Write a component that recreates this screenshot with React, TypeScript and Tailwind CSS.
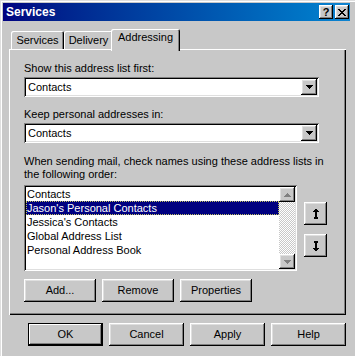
import React from "react";

const raised =
  "shadow-[inset_-1px_-1px_#000,inset_1px_1px_#fff,inset_-2px_-2px_#808080,inset_2px_2px_#dfdfdf]";
const sunken =
  "shadow-[inset_1px_1px_#808080,inset_-1px_-1px_#fff,inset_2px_2px_#000,inset_-2px_-2px_#dfdfdf]";

function Button({
  label,
  width,
  isDefault,
}: {
  label: string;
  width: string;
  isDefault?: boolean;
}): React.ReactElement {
  if (isDefault) {
    return (
      <div className={`${width} h-[23px] border border-black`}>
        <div
          className={`flex h-full w-full items-center justify-center shadow-[inset_-1px_-1px_#000,inset_1px_1px_#fff,inset_-2px_-2px_#808080] leading-[13px]`}
        >
          {label}
        </div>
      </div>
    );
  }
  return (
    <div className={`${width} flex h-[23px] items-center justify-center ${raised} leading-[13px]`}>
      {label}
    </div>
  );
}

function DropArrow(): React.ReactElement {
  return (
    <svg width="7" height="4" viewBox="0 0 7 4" shapeRendering="crispEdges">
      <path d="M0 0h7v1H0zM1 1h5v1H1zM2 2h3v1H2zM3 3h1v1H3z" fill="#000" />
    </svg>
  );
}

function Combo({ value }: { value: string }): React.ReactElement {
  return (
    <div className={`mt-[2px] flex h-[20px] w-[295px] items-center bg-white p-[2px] ${sunken}`}>
      <span className="flex-1 pl-[2px] leading-[13px]">{value}</span>
      <div className={`flex h-[16px] w-[16px] items-center justify-center bg-[#c8c8c8] ${raised}`}>
        <DropArrow />
      </div>
    </div>
  );
}

function ScrollArrow({ up }: { up?: boolean }): React.ReactElement {
  return (
    <div className={`flex h-[15px] w-[16px] items-center justify-center bg-[#c8c8c8] ${raised}`}>
      <svg width="7" height="4" viewBox="0 0 7 4" shapeRendering="crispEdges">
        <path
          d={up ? "M3 0h1v1H3zM2 1h3v1H2zM1 2h5v1H1zM0 3h7v1H0z" : "M0 0h7v1H0zM1 1h5v1H1zM2 2h3v1H2zM3 3h1v1H3z"}
          fill="#808080"
        />
      </svg>
    </div>
  );
}

function MoveIcon({ up }: { up?: boolean }): React.ReactElement {
  return (
    <svg width="6" height="10" viewBox="0 0 6 10" shapeRendering="crispEdges">
      <path
        d={
          up
            ? "M2 0h2v1h1v1h1v1H0V2h1V1h1zM2 3h2v5H2zM1 8h4v2H1z"
            : "M1 0h4v2H1zM2 2h2v5H2zM0 7h6v1H5v1H4v1H2V9H1V8H0z"
        }
        fill="#000"
      />
    </svg>
  );
}

const ITEMS = [
  "Contacts",
  "Jason's Personal Contacts",
  "Jessica's Contacts",
  "Global Address List",
  "Personal Address Book",
];

export default function App(): React.ReactElement {
  return (
    <div className="h-[356px] w-[355px] overflow-hidden bg-[#c8c8c8] pl-[3px] pt-[3px] font-['Liberation_Sans',Arial,sans-serif] text-[11px] text-black shadow-[inset_1px_1px_#dfdfdf,inset_2px_2px_#fff]">
      {/* title bar */}
      <div className="flex h-[18px] w-[347px] items-center justify-between bg-gradient-to-r from-[#000080] to-[#1084d0] pl-[3px] pr-[1px]">
        <span className="text-[12px] font-bold leading-none text-white">Services</span>
        <div className="flex gap-[2px]">
          <div className={`flex h-[14px] w-[14px] items-center justify-center bg-[#c8c8c8] ${raised} text-[11px] font-bold leading-none`}>
            ?
          </div>
          <div className={`flex h-[14px] w-[14px] items-center justify-center bg-[#c8c8c8] ${raised}`}>
            <svg width="8" height="7" viewBox="0 0 8 7" shapeRendering="crispEdges">
              <path
                d="M0 0h2v1h1v1h2V1h1V0h2v1H7v1H6v1H5v1h1v1h1v1h1v1H6V6H5V5H3v1H2v1H0V6h1V5h1V4h1V3H2V2H1V1H0z"
                fill="#000"
              />
            </svg>
          </div>
        </div>
      </div>

      <div className="ml-[6px] mt-[8px] w-[337px]">
        {/* tabs */}
        <div className="flex h-[20px] items-end pl-[2px]">
          <div className="flex h-[18px] w-[53px] justify-center rounded-t-[2px] pt-[3px] leading-[13px] shadow-[inset_1px_1px_#fff,inset_-1px_0_#000,inset_-2px_0_#808080]">
            Services
          </div>
          <div className="flex h-[18px] w-[49px] justify-center rounded-t-[2px] pt-[3px] leading-[13px] shadow-[inset_1px_1px_#fff,inset_-1px_0_#000,inset_-2px_0_#808080]">
            Delivery
          </div>
          <div className="relative z-10 -mb-[2px] -ml-[2px] flex h-[22px] w-[69px] justify-center rounded-t-[2px] bg-[#c8c8c8] pt-[2px] leading-[13px] shadow-[inset_1px_1px_#fff,inset_-1px_0_#000,inset_-2px_0_#808080]">
            Addressing
          </div>
        </div>

        {/* panel */}
        <div className="h-[266px] w-[337px] pl-[15px] pt-[13px] shadow-[inset_1px_1px_#fff,inset_-1px_-1px_#000,inset_-2px_-2px_#808080]">
          <div className="leading-[13px]">Show this address list first:</div>
          <Combo value="Contacts" />
          <div className="mt-[11px] leading-[13px]">Keep personal addresses in:</div>
          <Combo value="Contacts" />
          <div className="mt-[12px] whitespace-nowrap leading-[13px]">
            When sending mail, check names using these address lists in
            <br />
            the following order:
          </div>

          <div className="mt-[4px] flex gap-[7px]">
            <div className={`flex h-[86px] w-[273px] bg-white p-[2px] ${sunken}`}>
              <ul className="w-[253px]">
                {ITEMS.map((item, i) => (
                  <li
                    key={item}
                    className={
                      i === 1
                        ? "h-[14px] bg-[#000080] pl-[1px] leading-[14px] text-white outline-1 -outline-offset-1 outline-dotted outline-[#c0c060]"
                        : "h-[14px] pl-[1px] leading-[14px]"
                    }
                  >
                    {item}
                  </li>
                ))}
              </ul>
              <div className="flex w-[16px] flex-col">
                <ScrollArrow up />
                <div className="flex-1 bg-[repeating-conic-gradient(#fff_0%_25%,#c8c8c8_0%_50%)] bg-[length:2px_2px]" />
                <ScrollArrow />
              </div>
            </div>
            <div className="flex flex-col gap-[9px] pt-[17px]">
              <div className={`flex h-[23px] w-[23px] items-center justify-center ${raised}`}>
                <MoveIcon up />
              </div>
              <div className={`flex h-[23px] w-[23px] items-center justify-center ${raised}`}>
                <MoveIcon />
              </div>
            </div>
          </div>

          <div className="mt-[8px] flex gap-[6px]">
            <Button label="Add..." width="w-[72px]" />
            <Button label="Remove" width="w-[72px]" />
            <Button label="Properties" width="w-[72px]" />
          </div>
        </div>

        {/* dialog buttons */}
        <div className="mt-[8px] flex justify-end gap-[6px]">
          <Button label="OK" width="w-[75px]" isDefault />
          <Button label="Cancel" width="w-[75px]" />
          <Button label="Apply" width="w-[75px]" />
          <Button label="Help" width="w-[75px]" />
        </div>
      </div>
    </div>
  );
}
